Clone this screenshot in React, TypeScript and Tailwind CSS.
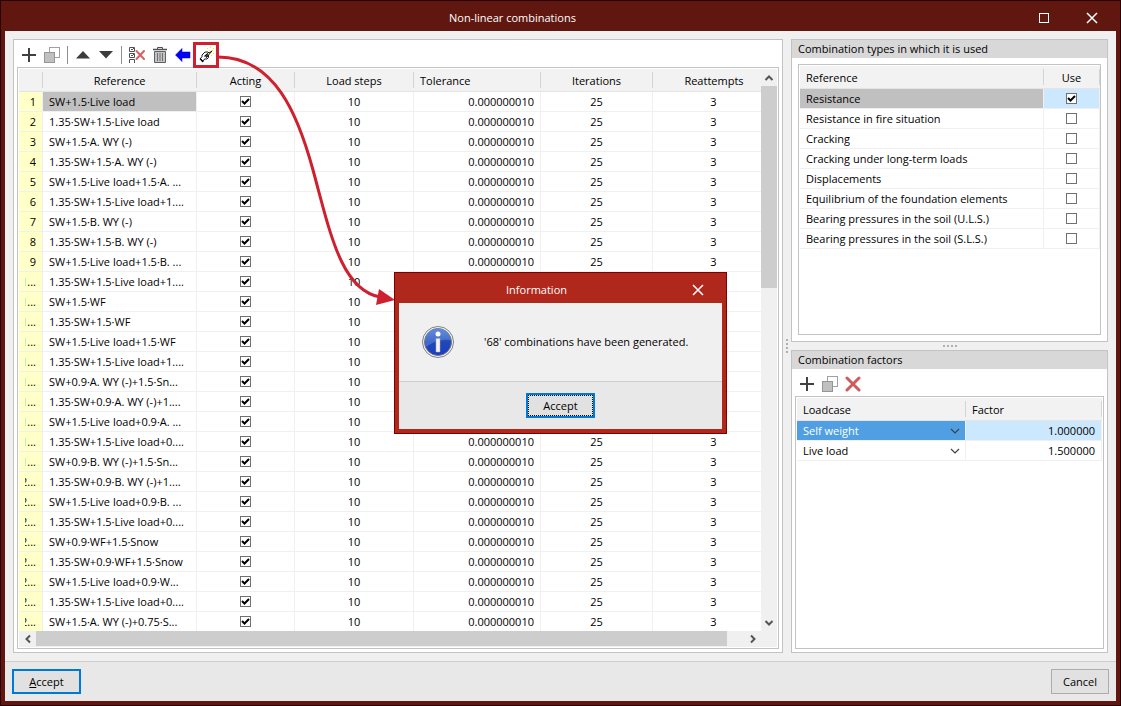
import React, { useState } from "react";

const combinations = [
  "SW+1.5·Live load",
  "1.35·SW+1.5·Live load",
  "SW+1.5·A. WY (-)",
  "1.35·SW+1.5·A. WY (-)",
  "SW+1.5·Live load+1.5·A. ...",
  "1.35·SW+1.5·Live load+1....",
  "SW+1.5·B. WY (-)",
  "1.35·SW+1.5·B. WY (-)",
  "SW+1.5·Live load+1.5·B. ...",
  "1.35·SW+1.5·Live load+1....",
  "SW+1.5·WF",
  "1.35·SW+1.5·WF",
  "SW+1.5·Live load+1.5·WF",
  "1.35·SW+1.5·Live load+1....",
  "SW+0.9·A. WY (-)+1.5·Sn...",
  "1.35·SW+0.9·A. WY (-)+1....",
  "SW+1.5·Live load+0.9·A. ...",
  "1.35·SW+1.5·Live load+0....",
  "SW+0.9·B. WY (-)+1.5·Sn...",
  "1.35·SW+0.9·B. WY (-)+1....",
  "SW+1.5·Live load+0.9·B. ...",
  "1.35·SW+1.5·Live load+0....",
  "SW+0.9·WF+1.5·Snow",
  "1.35·SW+0.9·WF+1.5·Snow",
  "SW+1.5·Live load+0.9·W...",
  "1.35·SW+1.5·Live load+0....",
  "SW+1.5·A. WY (-)+0.75·S...",
];

const combinationTypes = [
  "Resistance",
  "Resistance in fire situation",
  "Cracking",
  "Cracking under long-term loads",
  "Displacements",
  "Equilibrium of the foundation elements",
  "Bearing pressures in the soil (U.L.S.)",
  "Bearing pressures in the soil (S.L.S.)",
];

const factors = [
  { loadcase: "Self weight", factor: "1.000000" },
  { loadcase: "Live load", factor: "1.500000" },
];

const PlusIcon = () => (
  <svg className="block h-4 w-4" viewBox="0 0 16 16" fill="none" stroke="#404040" strokeWidth="2">
    <path d="M8 1v14M1 8h14" />
  </svg>
);

const CopyIcon = () => (
  <svg className="block h-4 w-4" viewBox="0 0 16 16">
    <rect x="5.5" y="0.5" width="10" height="10" fill="#fff" stroke="#a0a0a0" />
    <rect x="0.5" y="5.5" width="10" height="10" fill="#c0c0c0" stroke="#969696" />
  </svg>
);

const TriangleIcon = ({ down = false }: { down?: boolean }) => (
  <svg className="block h-4 w-4" viewBox="0 0 16 16" fill="#3c3c3c">
    <path d={down ? "M1 4h14l-7 7.5z" : "M1 11.5h14L8 4z"} />
  </svg>
);

const ClearListIcon = () => (
  <svg className="block h-4 w-4" viewBox="0 0 16 16" fill="none">
    <path d="M0.5 0.5h5v4h-5zM0.5 6.5h5v4h-5zM0.5 16v-3.500h5V16" stroke="#505050" />
    <path d="M2 2l1 1L5 1M2 8l1 1L5 7" stroke="#505050" />
    <path d="M7.500 4l7.500 8M15 4l-7.500 8" stroke="#d46262" strokeWidth="2" strokeLinecap="round" />
  </svg>
);

const TrashIcon = () => (
  <svg className="block h-4 w-4" viewBox="0 0 16 16" fill="none">
    <path d="M5.500 2V0.500h5V2" stroke="#505050" />
    <path d="M1 2.500h14" stroke="#505050" strokeWidth="1.500" />
    <path d="M2.500 4.500h11v11h-11z" fill="#c4c4c4" stroke="#606060" />
    <path d="M5.500 6v8M8 6v8M10.500 6v8" stroke="#707070" />
  </svg>
);

const BackArrowIcon = () => (
  <svg className="block h-4 w-4" viewBox="0 0 16 16">
    <path d="M0.500 8L7 1.500V5h8v6H7v3.500z" fill="#0000ff" stroke="#0000a0" strokeWidth="0.500" />
  </svg>
);

const WandIcon = () => (
  <svg className="block h-4 w-4" viewBox="0 0 16 16" fill="none">
    <path d="M2.500 11.500L4 9.500V8l3-3h3l1 1 3-2-3.500 4v2.500L9 12H6.500L5 14.500z" fill="#fff" stroke="#000" strokeWidth="0.900" />
    <path d="M2 11.500l3 3.500M6.500 9.500L10 6.500M8 10.500l2-2" stroke="#000" strokeWidth="1.200" />
    <path d="M9 1h1v1H9zM12 0h1v1h-1zM15 1h1v1h-1zM11 3h1v1h-1zM14 3h1v1h-1zM15 6h1v1h-1zM13 8h1v1h-1z" fill="#f4e800" />
  </svg>
);

const DeleteIcon = () => (
  <svg className="block h-4 w-4" viewBox="0 0 16 16" fill="none" stroke="#cd5c5c" strokeWidth="3">
    <path d="M2 2l12 12M14 2L2 14" strokeLinecap="round" />
  </svg>
);

const CloseIcon = () => (
  <svg className="block h-3 w-3" viewBox="0 0 12 12" fill="none" stroke="#fff" strokeWidth="1.500">
    <path d="M1 1l10 10M11 1L1 11" />
  </svg>
);

const Chevron = ({ className, color = "#555", bold = false }: { className: string; color?: string; bold?: boolean }) => (
  <svg className={className} viewBox="0 0 10 10" fill="none" stroke={color} strokeWidth={bold ? 2 : 1.2}>
    <path d={bold ? "M1.500 3L5 6.500 8.500 3" : "M1 3l4 4 4-4"} />
  </svg>
);

const InfoIcon = () => (
  <svg className="block h-8 w-8 shrink-0" viewBox="0 0 32 32">
    <defs>
      <linearGradient id="infoBlue" x1="0" y1="0" x2="0" y2="1">
        <stop offset="0" stopColor="#5a86dc" />
        <stop offset="0.5" stopColor="#2148b4" />
        <stop offset="1" stopColor="#1a3cc8" />
      </linearGradient>
    </defs>
    <circle cx="16" cy="16" r="15.500" fill="#f4f4f4" stroke="#808080" />
    <circle cx="16" cy="16" r="13.500" fill="url(#infoBlue)" stroke="#6f7684" />
    <path d="M3 16a13 13 0 0 1 26-2C21 13 12 15 4 21z" fill="#6c94e4" opacity="0.450" />
    <circle cx="16" cy="8" r="2.500" fill="#fff" />
    <path d="M14 12.500h4V26h-4z" fill="#f2f2f2" stroke="#a8a8a8" strokeWidth="0.500" />
  </svg>
);

const IconButton = ({ label, children }: { label: string; children: React.ReactNode }) => (
  <button type="button" aria-label={label} title={label} className="relative h-4 w-4 shrink-0">
    {children}
  </button>
);

const Separator = () => <span className="h-[18px] w-px shrink-0 bg-[#909090]" />;

const CheckBox = ({ label, initial }: { label: string; initial: boolean }) => {
  const [checked, setChecked] = useState(initial);

  return (
    <span className="mx-auto grid h-[11px] w-[11px]">
      <input
        type="checkbox"
        aria-label={label}
        checked={checked}
        onChange={(e) => setChecked(e.target.checked)}
        className="col-start-1 row-start-1 h-[11px] w-[11px] appearance-none border border-[#707070] bg-white"
      />
      {checked && (
        <svg
          className="pointer-events-none col-start-1 row-start-1 h-[11px] w-[11px]"
          viewBox="0 0 11 11"
          fill="none"
          stroke="#000"
          strokeWidth="2"
        >
          <path d="M2 5l2.500 2.500L9 3" />
        </svg>
      )}
    </span>
  );
};

interface HeadCellProps {
  children?: React.ReactNode;
  className?: string;
  last?: boolean;
}

const HeadCell = ({ children, className = "text-center", last = false }: HeadCellProps) => (
  <th className="h-[23px] border-b border-[#e4e4e4] bg-[#f2f2f2] p-0 font-normal">
    <div className={`h-4 whitespace-nowrap leading-[18px] ${last ? "" : "border-r border-[#d4d4d4]"} ${className}`}>
      {children}
    </div>
  </th>
);

const cell = "h-5 overflow-hidden whitespace-nowrap border-b border-r border-[#f0f0f0] py-0 leading-4";

const RowNumber = ({ value }: { value: number }) => (
  <div className="ml-[6px] flex w-[11px] justify-end overflow-hidden">
    <span className="shrink-0">{value < 10 ? value : `${Math.floor(value / 10)}...`}</span>
  </div>
);

const CombinationTable = () => (
  <div className="grid min-h-0 flex-1 grid-cols-[minmax(0,1fr)_16px] grid-rows-[minmax(0,1fr)_16px] border border-[#c3c3c3] p-px">
    <div className="overflow-hidden">
      <table className="w-[756px] table-fixed border-separate border-spacing-0">
        <colgroup>
          <col className="w-6" />
          <col className="w-[154px]" />
          <col className="w-[98px]" />
          <col className="w-[119px]" />
          <col className="w-[127px]" />
          <col className="w-[112px]" />
          <col className="w-[122px]" />
        </colgroup>
        <thead>
          <tr>
            <HeadCell />
            <HeadCell>Reference</HeadCell>
            <HeadCell>Acting</HeadCell>
            <HeadCell>Load steps</HeadCell>
            <HeadCell className="pl-[6px] text-left">Tolerance</HeadCell>
            <HeadCell>Iterations</HeadCell>
            <HeadCell last>Reattempts</HeadCell>
          </tr>
        </thead>
        <tbody>
          {combinations.map((name, i) => (
            <tr key={i}>
              <td className={`${cell} bg-[#ffffc8] px-0`}>
                <RowNumber value={i + 1} />
              </td>
              <td className={`${cell} pl-[6px] pr-0 ${i === 0 ? "bg-[#c0c0c0]" : ""}`}>{name}</td>
              <td className={`${cell} px-0`}>
                <CheckBox label={`Acting, row ${i + 1}`} initial />
              </td>
              <td className={`${cell} px-0 text-center`}>10</td>
              <td className={`${cell} pl-0 pr-[6px] text-right`}>0.000000010</td>
              <td className={`${cell} px-0 text-center`}>25</td>
              <td className={`${cell} px-0 text-center`}>3</td>
            </tr>
          ))}
        </tbody>
      </table>
    </div>

    {/* Vertical scroll bar */}
    <div className="flex flex-col bg-[#f0f0f0]">
      <button type="button" aria-label="Scroll up" className="grid h-[17px] place-items-center">
        <Chevron className="h-[10px] w-[10px] rotate-180" bold />
      </button>
      <div className="flex min-h-0 flex-1 flex-col">
        <div className="grow-[202] bg-[#cdcdcd]" />
        <div className="grow-[325]" />
      </div>
      <button type="button" aria-label="Scroll down" className="grid h-[17px] place-items-center">
        <Chevron className="h-[10px] w-[10px]" bold />
      </button>
    </div>

    {/* Horizontal scroll bar */}
    <div className="flex bg-[#f0f0f0]">
      <button type="button" aria-label="Scroll left" className="grid w-[17px] place-items-center">
        <Chevron className="h-[10px] w-[10px] rotate-90" bold />
      </button>
      <div className="flex min-w-0 flex-1">
        <div className="h-[15px] grow-[691] bg-[#cdcdcd]" />
        <div className="grow-[17]" />
      </div>
      <button type="button" aria-label="Scroll right" className="grid w-[17px] place-items-center">
        <Chevron className="h-[10px] w-[10px] -rotate-90" bold />
      </button>
    </div>
    <div className="bg-[#f0f0f0]" />
  </div>
);

const TypesTable = () => (
  <div className="m-[6px] min-h-0 flex-1 overflow-hidden border border-[#c3c3c3] py-px pl-px">
    <table className="w-full table-fixed border-separate border-spacing-0">
      <colgroup>
        <col />
        <col className="w-14" />
      </colgroup>
      <thead>
        <tr>
          <HeadCell className="pl-[6px] text-left">Reference</HeadCell>
          <HeadCell>Use</HeadCell>
        </tr>
      </thead>
      <tbody>
        {combinationTypes.map((name, i) => (
          <tr key={name}>
            <td className={`${cell} pl-[6px] pr-0 ${i === 0 ? "bg-[#c0c0c0]" : ""}`}>{name}</td>
            <td className={`${cell} px-0 ${i === 0 ? "bg-[#cce8ff]" : ""}`}>
              <CheckBox label={name} initial={i === 0} />
            </td>
          </tr>
        ))}
      </tbody>
    </table>
  </div>
);

const FactorsTable = () => (
  <div className="mx-[3px] mb-[3px] min-h-0 flex-1 overflow-hidden border border-[#c3c3c3] p-px">
    <table className="w-full table-fixed border-separate border-spacing-0">
      <colgroup>
        <col className="w-[169px]" />
        <col />
      </colgroup>
      <thead>
        <tr>
          <HeadCell className="pl-[6px] text-left">Loadcase</HeadCell>
          <HeadCell className="pl-[6px] text-left">Factor</HeadCell>
        </tr>
      </thead>
      <tbody>
        {factors.map((row, i) => (
          <tr key={row.loadcase}>
            <td className={`${cell} px-0 ${i === 0 ? "bg-[#4f9fe2] text-white" : ""}`}>
              <div className="grid items-center">
                <select
                  aria-label="Loadcase"
                  defaultValue={row.loadcase}
                  className="col-start-1 row-start-1 h-[19px] w-full appearance-none bg-transparent pl-[6px] outline-none"
                >
                  {factors.map((f) => (
                    <option key={f.loadcase} className="text-black">
                      {f.loadcase}
                    </option>
                  ))}
                </select>
                <Chevron
                  className="pointer-events-none col-start-1 row-start-1 mr-[5px] h-[10px] w-[10px] justify-self-end"
                  color="#404040"
                />
              </div>
            </td>
            <td className={`${cell} pl-0 pr-[6px] text-right ${i === 0 ? "bg-[#cce8ff]" : ""}`}>{row.factor}</td>
          </tr>
        ))}
      </tbody>
    </table>
  </div>
);

const PanelTitle = ({ children }: { children: React.ReactNode }) => (
  <h2 className="h-[18px] shrink-0 bg-[#d8d8d8] pl-[6px] leading-[18px]">{children}</h2>
);

const GripDots = () => (
  <>
    {[0, 1, 2, 3].map((n) => (
      <span key={n} className="h-[2px] w-[2px] bg-[#b0b0b0]" />
    ))}
  </>
);

const InformationDialog = ({ onClose }: { onClose: () => void }) => (
  <div className="pointer-events-none fixed inset-0 z-20 flex items-center justify-center">
    <div
      role="dialog"
      aria-label="Information"
      className="pointer-events-auto flex w-[333px] flex-col border border-[#7d0000] bg-[#b0281c] px-1 pb-1"
    >
      <header className="flex h-[30px] items-center text-white">
        <h2 className="flex-1 pt-1 text-center">Information</h2>
        <button type="button" aria-label="Close" onClick={onClose} className="grid h-full w-12 place-items-center pt-1">
          <CloseIcon />
        </button>
      </header>
      <div className="flex h-[78px] items-center gap-[30px] bg-[#f0f0f0] pl-[23px]">
        <InfoIcon />
        <p className="leading-[18px]">'68' combinations have been generated.</p>
      </div>
      <div className="flex justify-center border-t border-[#cdcdcd] bg-[#e8e8e8] py-[11px]">
        <button type="button" onClick={onClose} className="h-[25px] w-[69px] border-2 border-[#0078d7] bg-[#e1e1e1]">
          <span className="block h-full border border-dotted border-black leading-[19px]">Accept</span>
        </button>
      </div>
    </div>
  </div>
);

export default function App() {
  const [dialogOpen, setDialogOpen] = useState(true);

  return (
    <div className="flex h-screen flex-col border border-[#2b0000] bg-[#60170f] px-1 pb-1 font-['Open_Sans','Noto_Sans',sans-serif] text-[11px] leading-4 text-black">
      <header className="flex h-[30px] shrink-0 items-center text-white">
        <h1 className="flex-1 pt-1 text-center">Non-linear combinations</h1>
        <button type="button" aria-label="Maximize" className="grid h-full w-12 place-items-center pt-1">
          <span className="h-[10px] w-[10px] border border-white" />
        </button>
        <button type="button" aria-label="Close" className="grid h-full w-12 place-items-center pt-1">
          <CloseIcon />
        </button>
      </header>

      <main className="flex min-h-0 flex-1 bg-[#f0f0f0] p-2">
        <section className="flex min-w-0 flex-1 flex-col border border-[#c3c3c3] bg-white px-[3px] pb-[3px]">
          <div className="flex h-[27px] shrink-0 items-center gap-[7px] pl-1 pt-[3px]">
            <IconButton label="Add"><PlusIcon /></IconButton>
            <IconButton label="Copy"><CopyIcon /></IconButton>
            <Separator />
            <IconButton label="Move up"><TriangleIcon /></IconButton>
            <IconButton label="Move down"><TriangleIcon down /></IconButton>
            <Separator />
            <IconButton label="Delete selected"><ClearListIcon /></IconButton>
            <IconButton label="Delete all"><TrashIcon /></IconButton>
            <IconButton label="Import"><BackArrowIcon /></IconButton>
            <IconButton label="Generate">
              <WandIcon />
              <span className="pointer-events-none absolute -inset-[5px] border-[3px] border-[#cf2030]" />
              {/* Callout from the button to the dialog */}
              <svg
                className="pointer-events-none absolute left-0 top-0 z-10 h-[270px] w-[200px]"
                viewBox="0 0 200 270"
                fill="none"
              >
                <path
                  d="M20 10C77 10 100 68 115 123C132 185 143 243 182 250"
                  stroke="#cf2030"
                  strokeWidth="3"
                />
                <path d="M181 242l16 11-19 5z" fill="#cf2030" />
              </svg>
            </IconButton>
          </div>
          <CombinationTable />
        </section>

        <div className="flex w-2 shrink-0 flex-col items-center justify-center gap-[2px]">
          <GripDots />
        </div>

        <div className="flex w-[317px] shrink-0 flex-col">
          <section className="flex min-h-0 flex-1 flex-col border border-[#c3c3c3] bg-white">
            <PanelTitle>Combination types in which it is used</PanelTitle>
            <TypesTable />
          </section>
          <div className="flex h-2 shrink-0 items-center justify-center gap-[2px]">
            <GripDots />
          </div>
          <section className="flex min-h-0 flex-1 flex-col border border-[#c3c3c3] bg-white">
            <PanelTitle>Combination factors</PanelTitle>
            <div className="flex h-[27px] shrink-0 items-center gap-[7px] pl-[7px] pt-[3px]">
              <IconButton label="Add"><PlusIcon /></IconButton>
              <IconButton label="Copy"><CopyIcon /></IconButton>
              <IconButton label="Delete"><DeleteIcon /></IconButton>
            </div>
            <FactorsTable />
          </section>
        </div>
      </main>

      <footer className="flex shrink-0 justify-between border-t border-[#cdcdcd] bg-[#e8e8e8] p-[7px]">
        <button type="button" className="h-[25px] w-[69px] border-2 border-[#0078d7] bg-[#e1e1e1]">
          <span className="underline">A</span>ccept
        </button>
        <button type="button" className="h-[25px] w-[58px] border border-[#adadad] bg-[#e1e1e1]">
          Cancel
        </button>
      </footer>

      {dialogOpen && <InformationDialog onClose={() => setDialogOpen(false)} />}
    </div>
  );
}
